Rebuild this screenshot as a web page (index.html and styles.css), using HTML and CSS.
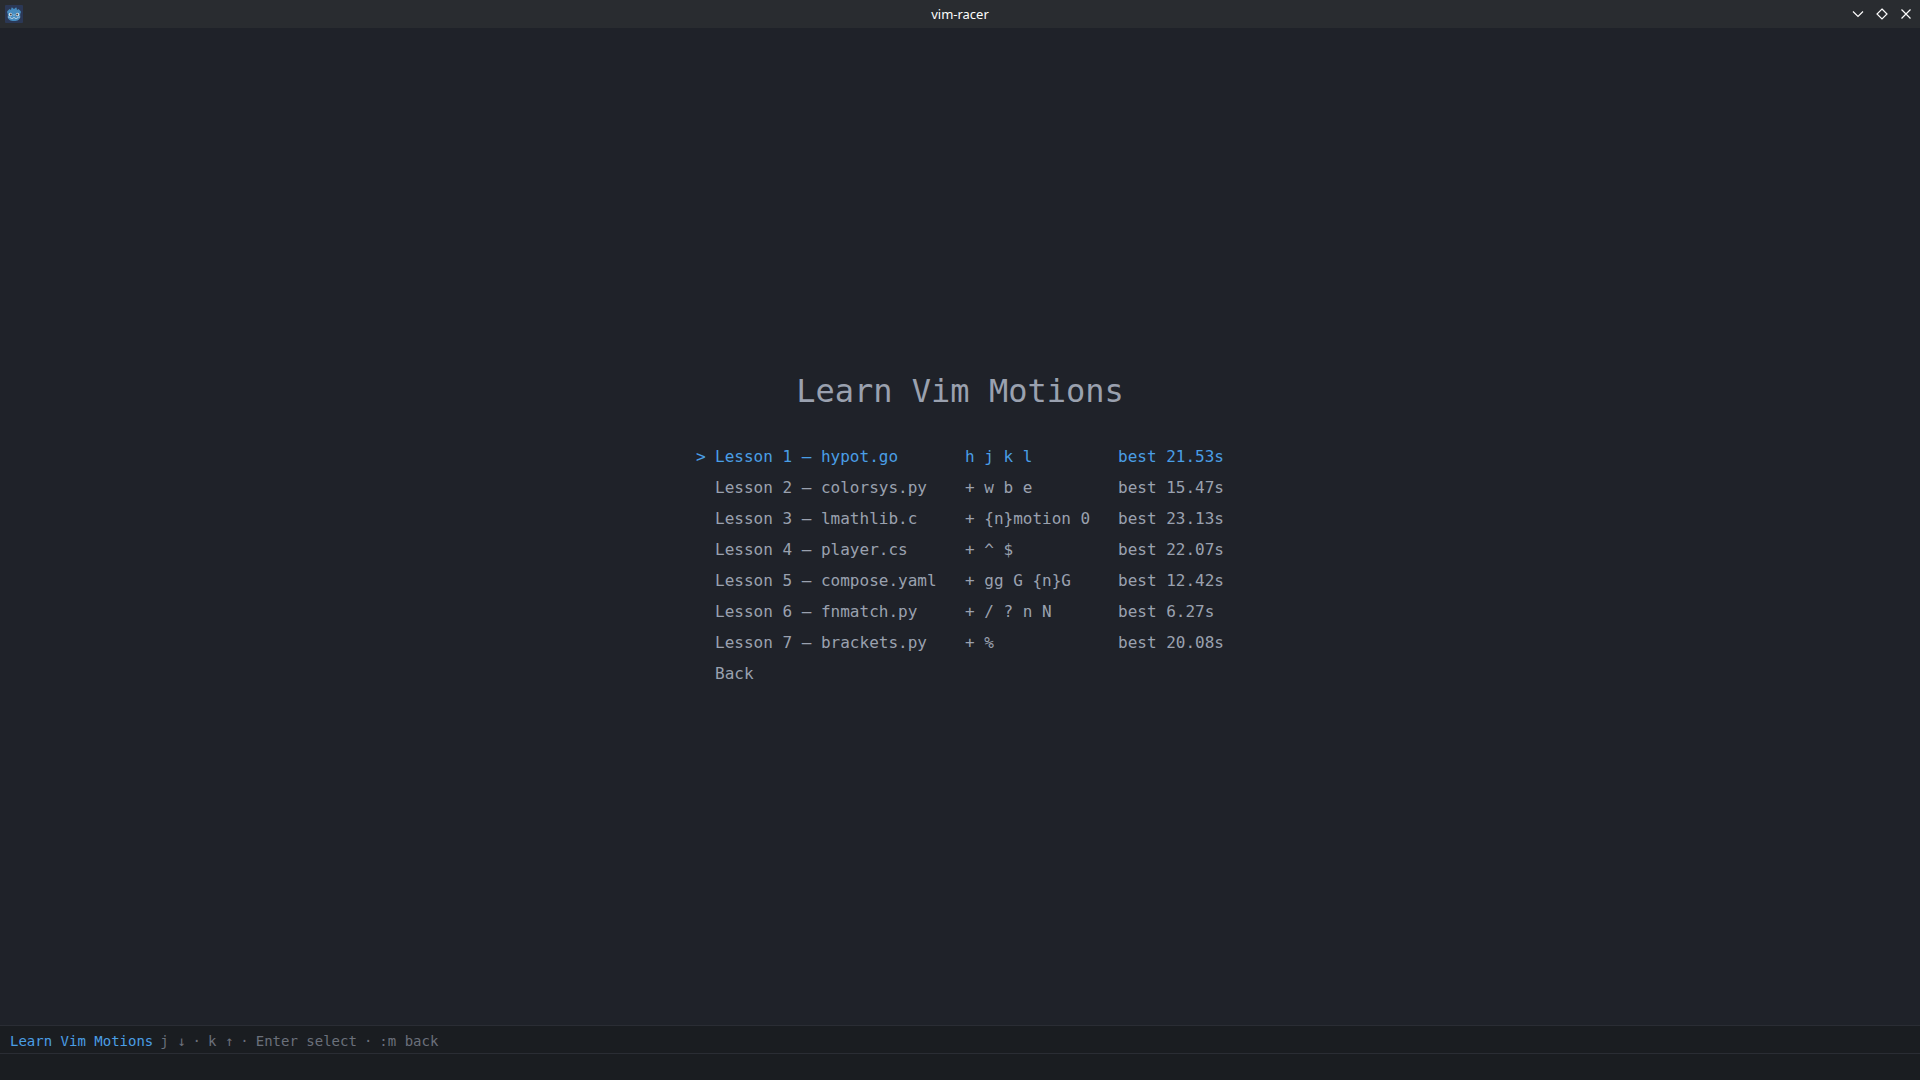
FILE: index.html
```html
<!DOCTYPE html>
<html lang="en">
<head>
    <meta charset="UTF-8">
    <meta name="viewport" content="width=device-width, initial-scale=1.0">
    <title>vim-racer</title>
    <link rel="stylesheet" href="styles.css">
</head>
<body>
    <header class="titlebar">
        <svg class="app-icon" viewBox="0 0 18 18" aria-hidden="true">
            <rect width="18" height="18" rx="1" fill="#2b3856"/>
            <path d="M2.500 6l2-2L6 5l.5-2.500 1.700.5.300 1h1l.3-1 1.700-.5L12 5l1.500-1 2 2 .5 1-.8 2V12c0 2.500-2.700 4-6.200 4s-6.200-1.500-6.200-4V9L2 7z" fill="#478cbf"/>
            <circle cx="5.500" cy="9.500" r="1.700" fill="#e4edf4"/>
            <circle cx="12.500" cy="9.500" r="1.700" fill="#e4edf4"/>
            <circle cx="5.800" cy="9.600" r="1" fill="#414042"/>
            <circle cx="12.200" cy="9.600" r="1" fill="#414042"/>
            <path d="M9 9v2M2.800 12l2.700.3.300 1.200H8l.2-1h1.600l.2 1h2.200l.3-1.200 2.700-.3" fill="none" stroke="#d5e4ef" stroke-width=".6"/>
        </svg>
        <span class="window-title">vim-racer</span>
        <div class="window-controls">
            <button type="button" aria-label="Minimize">
                <svg viewBox="0 0 12 12"><path d="M1 3.500l5 5 5-5"/></svg>
            </button>
            <button type="button" aria-label="Maximize">
                <svg viewBox="0 0 12 12"><path d="M6 1l5 5-5 5-5-5z"/></svg>
            </button>
            <button type="button" aria-label="Close">
                <svg viewBox="0 0 12 12"><path d="M1.500 1.500l9 9M10.500 1.500l-9 9"/></svg>
            </button>
        </div>
    </header>

    <main class="screen">
        <h1>Learn Vim Motions</h1>
        <div class="menu">
            <button type="button" class="lesson selected"><span>&gt;</span><span>Lesson 1 — hypot.go</span><span>h j k l</span><span>best 21.53s</span></button>
            <button type="button" class="lesson"><span></span><span>Lesson 2 — colorsys.py</span><span>+ w b e</span><span>best 15.47s</span></button>
            <button type="button" class="lesson"><span></span><span>Lesson 3 — lmathlib.c</span><span>+ {n}motion 0</span><span>best 23.13s</span></button>
            <button type="button" class="lesson"><span></span><span>Lesson 4 — player.cs</span><span>+ ^ $</span><span>best 22.07s</span></button>
            <button type="button" class="lesson"><span></span><span>Lesson 5 — compose.yaml</span><span>+ gg G {n}G</span><span>best 12.42s</span></button>
            <button type="button" class="lesson"><span></span><span>Lesson 6 — fnmatch.py</span><span>+ / ? n N</span><span>best 6.27s</span></button>
            <button type="button" class="lesson"><span></span><span>Lesson 7 — brackets.py</span><span>+ %</span><span>best 20.08s</span></button>
            <button type="button" class="lesson"><span></span><span>Back</span></button>
        </div>
    </main>

    <footer>
        <div class="statusline">
            <span class="mode">Learn Vim Motions</span>
            <span>j ↓</span>
            <span>·</span>
            <span>k ↑</span>
            <span>·</span>
            <span>Enter select</span>
            <span>·</span>
            <span>:m back</span>
        </div>
        <div class="cmdline"></div>
    </footer>
</body>
</html>
```
FILE: styles.css
```css
* {
    margin: 0;
    padding: 0;
    box-sizing: border-box;
}

body {
    display: flex;
    flex-direction: column;
    min-height: 100vh;
    background: #1f2229;
    color: #9aa1af;
    font-family: "DejaVu Sans Mono", monospace;
    font-size: 16px;
}

button {
    background: none;
    border: none;
    color: inherit;
    font: inherit;
    cursor: pointer;
}

/* Window title bar */
.titlebar {
    display: grid;
    grid-template-columns: 1fr auto 1fr;
    align-items: center;
    height: 28px;
    padding: 0 5px;
    background: #292c30;
    color: #fcfcfc;
}

.app-icon {
    width: 18px;
    height: 18px;
}

.window-title {
    font-family: "Noto Sans", sans-serif;
    font-size: 13px;
    line-height: 28px;
}

.window-controls {
    display: flex;
    justify-content: flex-end;
    gap: 12px;
    padding-right: 3px;
}

.window-controls button {
    display: flex;
}

.window-controls svg {
    width: 12px;
    height: 12px;
    fill: none;
    stroke: #fcfcfc;
    stroke-width: 1.2;
}

/* Lesson menu */
.screen {
    flex: 1;
    display: flex;
    flex-direction: column;
    align-items: center;
    justify-content: center;
}

h1 {
    margin-bottom: 24px;
    font-size: 32px;
    font-weight: normal;
    line-height: 52px;
}

.lesson {
    display: grid;
    grid-template-columns: 19px 250px 153px 106px;
    line-height: 31px;
    text-align: left;
    white-space: nowrap;
}

.lesson.selected {
    color: #4a9ee5;
}

/* Status and command lines */
footer {
    background: #1a1d21;
    color: #6b707b;
    font-size: 14px;
}

.statusline {
    display: flex;
    gap: 7px;
    padding: 3px 10px 0;
    border-top: 1px solid #2a2d34;
    border-bottom: 1px solid #2a2d34;
    line-height: 24px;
}

.statusline .mode {
    color: #4a9ee5;
}

.cmdline {
    height: 26px;
}
```
